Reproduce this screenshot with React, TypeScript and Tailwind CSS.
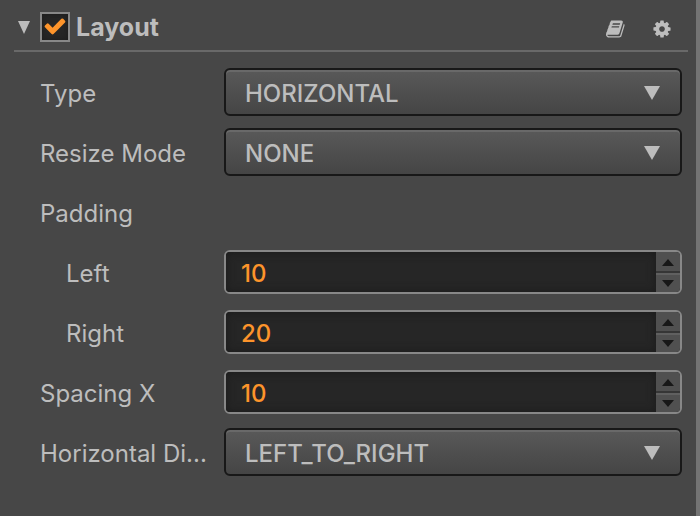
import React, { useState } from "react";

function Row({ label, htmlFor, indent = false, children }: { label: string; htmlFor?: string; indent?: boolean; children?: React.ReactNode }) {
  return (
    <div className="flex h-15 items-center">
      <label
        htmlFor={htmlFor}
        className={`w-[184px] shrink-0 pt-1 leading-8 font-normal whitespace-nowrap ${indent ? "pl-[26px]" : ""}`}
      >
        {label}
      </label>
      {children}
    </div>
  );
}

function SelectField({ id, options }: { id: string; options: string[] }) {
  return (
    <div className="relative min-w-0 flex-1">
      <select
        id={id}
        className="block h-12 w-full appearance-none rounded-md border-2 border-[#181818] bg-linear-to-b from-[#595959] to-[#454545] pt-1 pr-14 pl-[19px] text-[#bdbdbd] shadow-[inset_0_2px_0_#696969] outline-none"
      >
        {options.map((o) => (
          <option key={o}>{o}</option>
        ))}
      </select>
      <svg className="pointer-events-none absolute top-[18px] right-[22px] h-[14px] w-4 fill-[#bdbdbd]" viewBox="0 0 16 14">
        <path d="M0 0h16L8 14z" />
      </svg>
    </div>
  );
}

function NumberField({ id, initial }: { id: string; initial: number }) {
  const [value, setValue] = useState(String(initial));
  const step = (d: number) => setValue(String((Number(value) || 0) + d));
  return (
    <div className="flex h-11 min-w-0 flex-1 overflow-hidden rounded-md border-2 border-[#888888] bg-[#262626]">
      <input
        id={id}
        type="text"
        inputMode="numeric"
        value={value}
        onChange={(e) => setValue(e.target.value)}
        className="min-w-0 flex-1 bg-[#262626] pt-1 pl-[15px] text-[#fd942b] shadow-[inset_0_0_10px_#1c1c1c] outline-none"
      />
      <div className="flex w-6 flex-col bg-[#505050]">
        <button type="button" aria-label="Increase" onClick={() => step(1)} className="flex flex-1 items-center justify-center border-b-2 border-[#363636] pt-0.5">
          <svg className="h-[7px] w-3 fill-[#181818]" viewBox="0 0 12 7"><path d="M6 0l6 7H0z" /></svg>
        </button>
        <button type="button" aria-label="Decrease" onClick={() => step(-1)} className="flex flex-1 items-center justify-center border-t-2 border-[#606060]">
          <svg className="h-[7px] w-3 fill-[#181818]" viewBox="0 0 12 7"><path d="M0 0h12L6 7z" /></svg>
        </button>
      </div>
    </div>
  );
}

export default function App() {
  return (
    <main className="min-h-screen border-r-4 border-[#747474] bg-[#474747] pr-2 pl-[14px] font-['Inter','Liberation_Sans',sans-serif] text-2xl font-medium text-[#bdbdbd]">
      <header className="flex h-[52px] items-center border-b-2 border-[#696969] pt-1 pr-4">
        <button type="button" aria-label="Collapse" className="mr-1.5 flex w-5 items-center justify-center pt-px">
          <svg className="h-[13px] w-3 fill-[#bdbdbd]" viewBox="0 0 12 13"><path d="M0 0h12L6 13z" /></svg>
        </button>
        <span className="relative size-[30px]">
          <input
            id="enabled"
            type="checkbox"
            defaultChecked
            className="peer block size-[30px] appearance-none border-2 border-[#888888] bg-[#262626] shadow-[inset_0_0_6px_#1c1c1c]"
          />
          <svg className="pointer-events-none absolute top-[2px] left-[3px] hidden size-6 fill-[#fd942b] peer-checked:block" viewBox="0 0 1792 1792">
            <path d="M1671 566q0 40-28 68l-724 724-136 136q-28 28-68 28t-68-28l-136-136-362-362q-28-28-28-68t28-68l136-136q28-28 68-28t68 28l294 295 656-657q28-28 68-28t68 28l136 136q28 28 28 68z" />
          </svg>
        </span>
        <label htmlFor="enabled" className="pt-0.5 pl-1.5 text-[25px] font-bold">Layout</label>
        <button type="button" aria-label="Help" className="mt-1 ml-auto">
          <svg className="size-5 fill-[#bdbdbd]" viewBox="0 0 1792 1792">
            <path d="M1639 478q40 57 18 129l-275 906q-19 64-76.500 107.500t-122.500 43.500h-923q-77 0-148.500-53.500t-99.500-131.500q-24-67-2-127 0-4 3-27t4-37q1-8-3-21.500t-3-19.500q2-11 8-21t16.500-23.500 16.500-23.500q23-38 45-91.500t30-91.500q3-10 .5-30t-.5-28q3-11 17-28t17-23q21-36 42-92t25-90q1-9-2.500-32t.5-28q4-13 22-30.500t22-22.500q19-26 42.500-84.500t27.500-96.500q1-8-3-25.500t-2-26.500q2-8 9-18t18-23 17-21q8-12 16.500-30.500t15-35 16-36 19.500-32 26.500-23.500 36-11.500 47.500 5.500l-1 3q38-9 51-9h761q74 0 114 56t18 130l-274 906q-36 119-71.500 153.500t-128.500 34.500h-869q-27 0-38 15-11 16-1 43 24 70 144 70h923q29 0 56-15.500t35-41.500l300-987q7-22 5-57 38 15 59 43zm-1064 2q-4 13 2 22.500t20 9.500h608q13 0 25.500-9.500t16.500-22.500l21-64q4-13-2-22.500t-20-9.500h-608q-13 0-25.500 9.500t-16.500 22.500zm-83 256q-4 13 2 22.500t20 9.500h608q13 0 25.500-9.500t16.500-22.500l21-64q4-13-2-22.500t-20-9.500h-608q-13 0-25.500 9.500t-16.500 22.500z" />
          </svg>
        </button>
        <button type="button" aria-label="Settings" className="mt-1 ml-[26px]">
          <svg className="size-5 fill-[#bdbdbd]" viewBox="0 0 1792 1792">
            <path d="M1152 896q0-106-75-181t-181-75-181 75-75 181 75 181 181 75 181-75 75-181zm512-109v222q0 12-8 23t-20 13l-185 28q-19 54-39 91 35 50 107 138 10 12 10 25t-9 23q-27 37-99 108t-94 71q-12 0-26-9l-138-108q-44 23-91 38-16 136-29 186-7 28-36 28h-222q-14 0-24.500-8.500t-11.500-21.500l-28-184q-49-16-90-37l-141 107q-10 9-25 9-14 0-25-11-126-114-165-168-7-10-7-23 0-12 8-23 15-21 51-66.500t54-70.500q-27-50-41-99l-183-27q-13-2-21-12.500t-8-23.500v-222q0-12 8-23t19-13l186-28q14-46 39-92-40-57-107-138-10-12-10-24 0-10 9-23 26-36 98.500-107.500t94.500-71.500q13 0 26 10l138 107q44-23 91-38 16-136 29-186 7-28 36-28h222q14 0 24.500 8.500t11.500 21.500l28 184q49 16 90 37l142-107q9-9 24-9 13 0 25 10 129 119 165 170 7 8 7 22 0 12-8 23-15 21-51 66.500t-54 70.500q26 50 41 98l183 28q13 2 21 12.500t8 23.500z" />
          </svg>
        </button>
      </header>
      <div className="pt-2.5 pr-1.5 pl-[26px]">
        <Row label="Type" htmlFor="type"><SelectField id="type" options={["HORIZONTAL"]} /></Row>
        <Row label="Resize Mode" htmlFor="resize"><SelectField id="resize" options={["NONE"]} /></Row>
        <Row label="Padding" />
        <Row label="Left" htmlFor="left" indent><NumberField id="left" initial={10} /></Row>
        <Row label="Right" htmlFor="right" indent><NumberField id="right" initial={20} /></Row>
        <Row label="Spacing X" htmlFor="spacing"><NumberField id="spacing" initial={10} /></Row>
        <Row label="Horizontal Di..." htmlFor="direction"><SelectField id="direction" options={["LEFT_TO_RIGHT"]} /></Row>
      </div>
    </main>
  );
}
